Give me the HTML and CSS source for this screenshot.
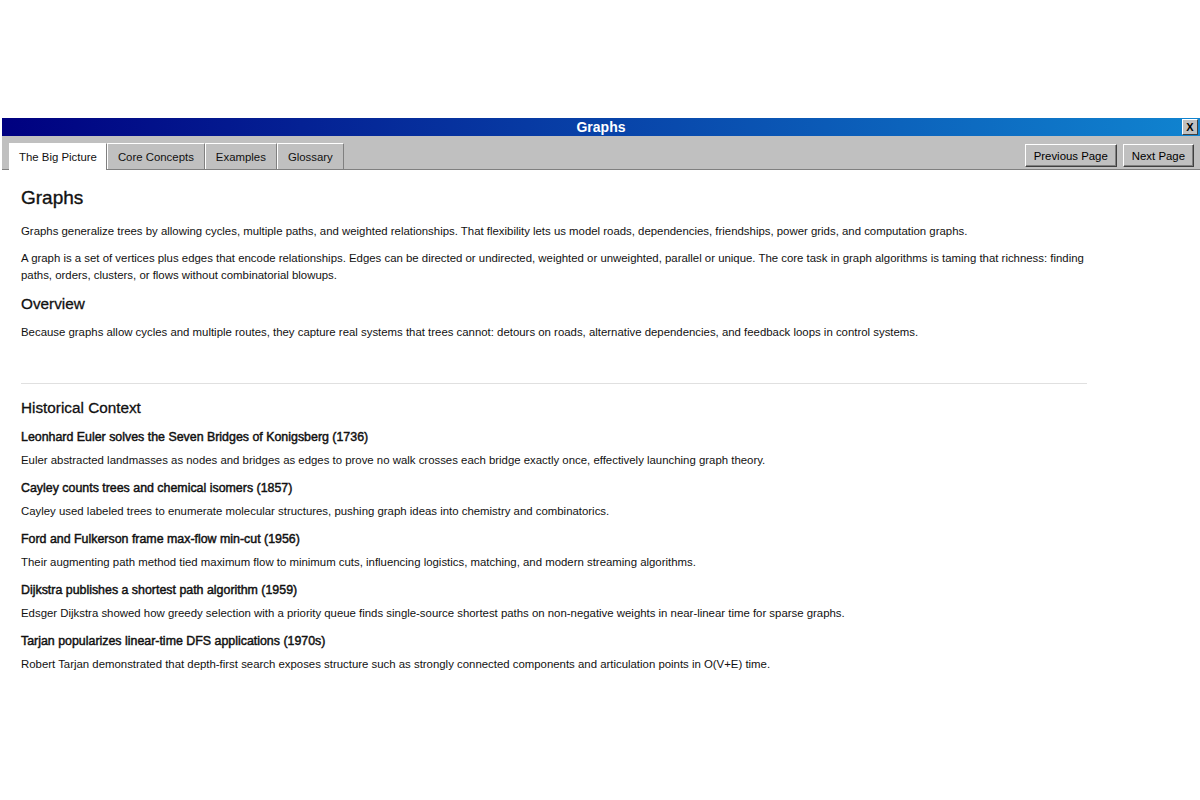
FILE: index.html
```html
<!DOCTYPE html>
<html>
<head>
<meta charset="utf-8">
<title>Graphs</title>
<link rel="stylesheet" href="styles.css">
</head>
<body>
<div class="window">
  <div class="titlebar">
    <span class="title">Graphs</span>
    <span class="close">X</span>
  </div>
  <div class="tabbar">
    <div class="tabs">
      <div class="tab active">The Big Picture</div>
      <div class="tab">Core Concepts</div>
      <div class="tab">Examples</div>
      <div class="tab">Glossary</div>
    </div>
    <div class="navs">
      <button class="btn">Previous Page</button>
      <button class="btn">Next Page</button>
    </div>
  </div>
  <div class="content">
    <h1>Graphs</h1>
    <p>Graphs generalize trees by allowing cycles, multiple paths, and weighted relationships. That flexibility lets us model roads, dependencies, friendships, power grids, and computation graphs.</p>
    <p>A graph is a set of vertices plus edges that encode relationships. Edges can be directed or undirected, weighted or unweighted, parallel or unique. The core task in graph algorithms is taming that richness: finding paths, orders, clusters, or flows without combinatorial blowups.</p>
    <h2>Overview</h2>
    <p>Because graphs allow cycles and multiple routes, they capture real systems that trees cannot: detours on roads, alternative dependencies, and feedback loops in control systems.</p>
    <hr class="rule">
    <h2 class="hist">Historical Context</h2>
    <h3>Leonhard Euler solves the Seven Bridges of Konigsberg (1736)</h3>
    <p>Euler abstracted landmasses as nodes and bridges as edges to prove no walk crosses each bridge exactly once, effectively launching graph theory.</p>
    <h3>Cayley counts trees and chemical isomers (1857)</h3>
    <p>Cayley used labeled trees to enumerate molecular structures, pushing graph ideas into chemistry and combinatorics.</p>
    <h3>Ford and Fulkerson frame max-flow min-cut (1956)</h3>
    <p>Their augmenting path method tied maximum flow to minimum cuts, influencing logistics, matching, and modern streaming algorithms.</p>
    <h3>Dijkstra publishes a shortest path algorithm (1959)</h3>
    <p>Edsger Dijkstra showed how greedy selection with a priority queue finds single-source shortest paths on non-negative weights in near-linear time for sparse graphs.</p>
    <h3>Tarjan popularizes linear-time DFS applications (1970s)</h3>
    <p>Robert Tarjan demonstrated that depth-first search exposes structure such as strongly connected components and articulation points in O(V+E) time.</p>
  </div>
</div>
</body>
</html>
```

FILE: styles.css
```css
html, body {
  margin: 0;
  padding: 0;
  background: #ffffff;
}
body {
  font-family: "Liberation Sans", Arial, sans-serif;
  color: #111;
  padding-top: 118px;
  padding-left: 2px;
}
.window {
  background: #fff;
}
.titlebar {
  height: 18px;
  background: linear-gradient(to right, #000080, #1084d0);
  display: flex;
  align-items: center;
  justify-content: center;
  position: relative;
}
.title {
  color: #fff;
  font-weight: bold;
  font-size: 14px;
}
.close {
  position: absolute;
  right: 2px;
  top: 1px;
  width: 16px;
  height: 16px;
  background: #c0c0c0;
  border: 1px solid;
  border-color: #fff #404040 #404040 #fff;
  box-sizing: border-box;
  font-size: 11px;
  font-weight: bold;
  color: #000;
  display: flex;
  align-items: center;
  justify-content: center;
}
.tabbar {
  height: 33px;
  background: #c0c0c0;
  border-bottom: 1px solid #808080;
  display: flex;
  justify-content: space-between;
  align-items: flex-end;
  padding-left: 7px;
  padding-right: 6px;
}
.tabs {
  display: flex;
  align-items: flex-end;
}
.tab {
  height: 26px;
  box-sizing: border-box;
  padding: 0 10px;
  border: 1px solid;
  border-color: #ffffff #808080 #c0c0c0 #ffffff;
  border-bottom: none;
  font-size: 11.4px;
  display: flex;
  align-items: center;
  background: #c0c0c0;
}
.tab.active {
  background: #fff;
  height: 27px;
  margin-bottom: -1px;
  padding: 0 9px;
}
.navs {
  display: flex;
  gap: 6px;
  align-self: flex-end;
  padding-bottom: 2px;
}
.btn {
  font-family: "Liberation Sans", Arial, sans-serif;
  font-size: 11.4px;
  background: #c0c0c0;
  height: 23px;
  padding: 0 8px;
  border: 1px solid;
  border-color: #fff #404040 #404040 #fff;
  box-shadow: inset -1px -1px 0 #808080;
  color: #000;
}
.content {
  padding: 17px 19px 20px 19px;
  max-width: 1066px;
}
h1 {
  font-size: 19px;
  font-weight: normal;
  margin: 0 0 14px 0;
  -webkit-text-stroke: 0.35px #111;
}
h2 {
  font-size: 15.3px;
  font-weight: normal;
  margin: 11px 0 11px 0;
  -webkit-text-stroke: 0.3px #111;
}
h3 {
  font-size: 12.4px;
  line-height: 17px;
  font-weight: normal;
  margin: 11px 0 6px 0;
  -webkit-text-stroke: 0.45px #111;
}
p {
  font-size: 11.4px;
  line-height: 17px;
  margin: 0 0 10px 0;
}
.rule {
  border: none;
  border-top: 1px solid #e0e0e0;
  margin: 42px 0 0 0;
}
h2.hist {
  margin-top: 15px;
  margin-bottom: 12px;
}
```
